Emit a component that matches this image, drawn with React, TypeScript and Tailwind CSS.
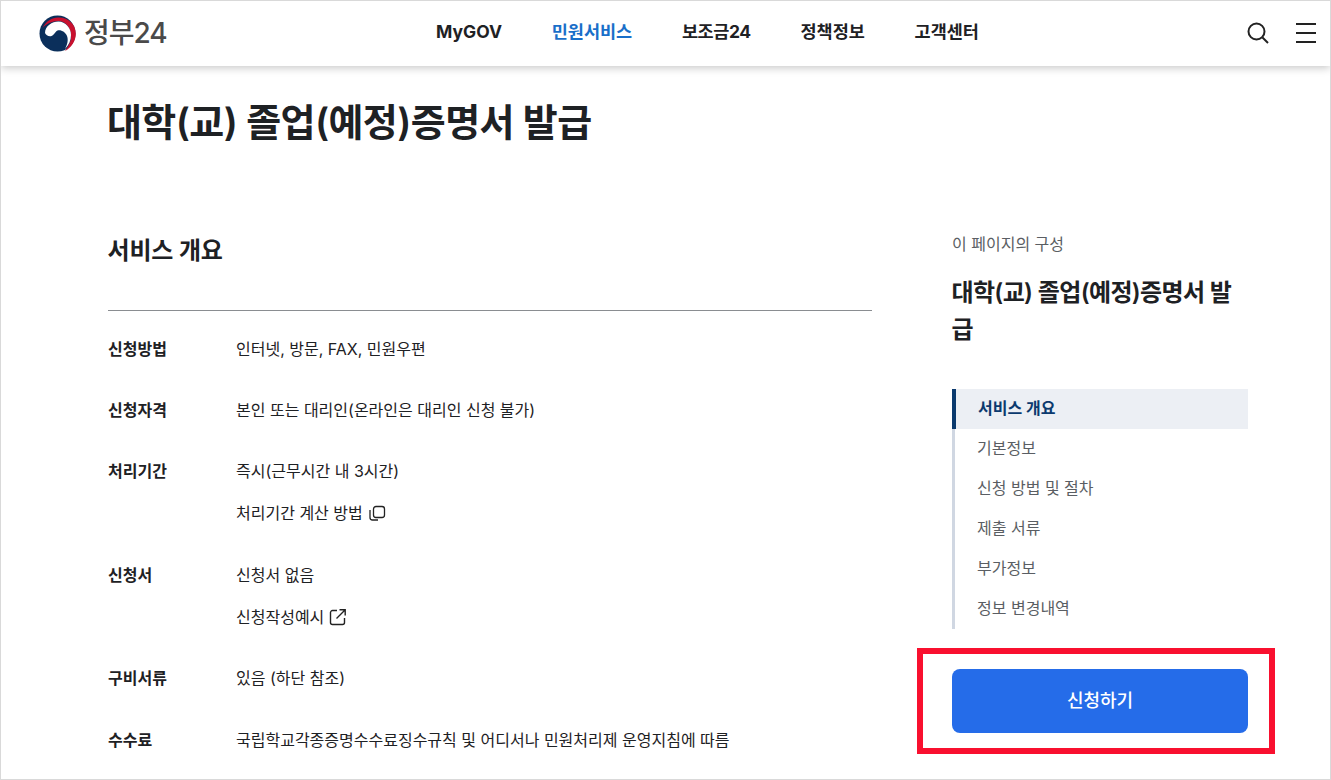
const font = { fontFamily: 'Inter, "Noto Sans CJK KR", "Noto Sans", sans-serif' }

const navItems = ['MyGOV', '민원서비스', '보조금24', '정책정보', '고객센터']
const tocItems = ['기본정보', '신청 방법 및 절차', '제출 서류', '부가정보', '정보 변경내역']

function Logo() {
  return (
    <div className="flex items-center gap-[8px]">
      <svg width="37" height="37" viewBox="0 0 37 37">
        <circle cx="18.5" cy="18.5" r="18" fill="#0b2f5b" />
        <path d="M3.500 13 C7 6 13 2.500 19 2.500 C29 2 36.800 9 36.800 19 C36.800 26 32 33 26 36 C30 31 32.500 25 32 20 C31.500 12 26 6 19.500 6 C13 6 7 9 3.500 13 Z" fill="#c8102e" />
        <path d="M6 18 C6 11 13 6.500 19.500 6.500 C26.500 6.500 32 13 32 20 C32 25 30 30 26 34 C28.500 29 29.500 25 28 21 C26.500 17 22 14.500 18.500 15.500 C16 16.500 15.500 20 12.500 21 C9.500 21.800 7 20 6 18 Z" fill="#fff" />
      </svg>
      <span className="-mt-[2px] text-[28px] leading-none font-medium tracking-[-1px] text-[#4a4a4a]">정부24</span>
    </div>
  )
}

function Row({ label, children }: { label: string; children: React.ReactNode }) {
  return (
    <div className="flex">
      <div className="w-[128px] shrink-0 text-[16px] leading-[24px] font-bold text-[#1e2124]">{label}</div>
      <div className="flex flex-col gap-[18px] text-[16px] leading-[24px] text-[#1e2124]">{children}</div>
    </div>
  )
}

export default function App() {
  return (
    <div style={font} className="h-[780px] w-[1331px] overflow-hidden border border-[#d9d9d9] bg-white">
      <header className="relative z-10 flex h-[65px] items-center justify-between bg-white pl-[38px] pr-[14px] shadow-[0_2px_8px_rgba(0,0,0,0.22)]">
        <Logo />
        <nav className="absolute left-[435px] top-0 flex h-full items-center gap-[49.7px] pb-[2px]">
          {navItems.map((t, i) => (
            <span key={t} className={`text-[17.5px] font-bold ${i === 1 ? 'text-[#1a6fc9]' : 'text-[#1e2124]'} ${i === 2 ? 'tracking-[-0.4px]' : ''}`}>{t}</span>
          ))}
        </nav>
        <div className="flex items-center gap-[26px] pb-[2px]">
          <svg width="24" height="24" viewBox="0 0 24 24" fill="none" stroke="#222" strokeWidth="2">
            <circle cx="10.500" cy="10.500" r="8" />
            <path d="M16.500 16.500 L22 22" />
          </svg>
          <div className="flex w-[20px] flex-col gap-[7px]">
            <div className="h-[2px] bg-[#222]" />
            <div className="h-[2px] bg-[#222]" />
            <div className="h-[2px] bg-[#222]" />
          </div>
        </div>
      </header>

      <main className="flex pl-[107px]">
        <div className="w-[764px]">
          <h1 className="mt-[26px] -ml-[1px] text-[38px] leading-[60px] font-semibold tracking-[-0.6px] text-[#1e2124]">대학(교) 졸업(예정)증명서 발급</h1>
          <h2 className="mt-[81px] -ml-[0.5px] text-[24px] leading-[36px] font-semibold tracking-[-0.2px] text-[#1e2124]">서비스 개요</h2>
          <div className="mt-[41px] border-t border-[#8a8d91] pt-[25.7px]">
            <div className="flex flex-col gap-[37.4px]">
              <Row label="신청방법"><span>인터넷, 방문, FAX, 민원우편</span></Row>
              <Row label="신청자격"><span>본인 또는 대리인(온라인은 대리인 신청 불가)</span></Row>
              <Row label="처리기간">
                <span>즉시(근무시간 내 3시간)</span>
                <span className="flex items-center gap-[5px]">
                  처리기간 계산 방법
                  <svg width="18" height="18" viewBox="0 0 18 18" fill="none" stroke="#222" strokeWidth="1.300">
                    <rect x="5.500" y="2.500" width="11" height="11" rx="2.500" />
                    <path d="M2 6 V13.500 C2 15 3 16 4.500 16 H10" />
                  </svg>
                </span>
              </Row>
              <Row label="신청서">
                <span>신청서 없음</span>
                <span className="flex items-center gap-[5px]">
                  신청작성예시
                  <svg width="18" height="18" viewBox="0 0 18 18" fill="none" stroke="#222" strokeWidth="1.400">
                    <path d="M8 2.500 H3.500 C2.500 2.500 1.500 3.500 1.500 4.500 V14.500 C1.500 15.500 2.500 16.500 3.500 16.500 H13.500 C14.500 16.500 15.500 15.500 15.500 14.500 V10" />
                    <path d="M7.500 10.500 L16 2 M10.500 1.800 H16.200 V7.500" />
                  </svg>
                </span>
              </Row>
              <Row label="구비서류"><span>있음 (하단 참조)</span></Row>
              <Row label="수수료"><span>국립학교각종증명수수료징수규칙 및 어디서나 민원처리제 운영지침에 따름</span></Row>
            </div>
          </div>
        </div>

        <aside className="ml-[80px] w-[296px] pt-[166px]">
          <p className="text-[16px] leading-[24px] text-[#5a5e63]">이 페이지의 구성</p>
          <p className="mt-[18px] -ml-[0.5px] break-all text-[24px] leading-[37px] font-semibold tracking-[-0.65px] text-[#1e2124]">대학(교) 졸업(예정)증명서 발급</p>
          <div className="mt-[41px] border-l-[3px] border-[#d0d7e2]">
            <div className="-ml-[3px] flex h-[40px] items-center border-l-[4px] border-[#0b3a6e] bg-[#eceff4] pb-[2px] pl-[22px] text-[16px] font-bold text-[#0b3a6e]">서비스 개요</div>
            {tocItems.map(t => (
              <div key={t} className="flex h-[40px] items-center pb-[2px] pl-[22px] text-[16px] text-[#5a5e63]">{t}</div>
            ))}
          </div>
          <div className="relative mt-[40px]">
            <button className="h-[64px] w-full rounded-[8px] bg-[#256ce9] pb-[2px] text-[18px] font-medium text-white">신청하기</button>
            <div className="absolute -left-[35px] -right-[27px] -top-[21px] -bottom-[21px] border-[6px] border-[#f9102f]" />
          </div>
        </aside>
      </main>
    </div>
  )
}
